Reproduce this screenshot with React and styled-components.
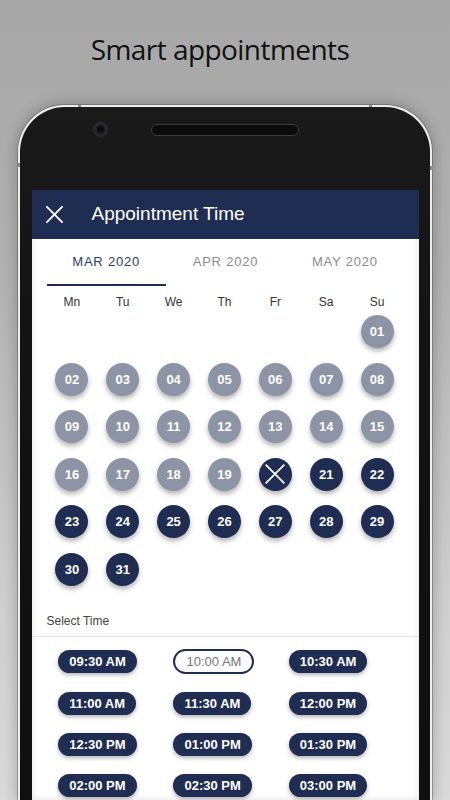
import React from "react";
import styled, { createGlobalStyle } from "styled-components";

const NAVY = "#1f2d52";
const PAST = "#8d94a6";

const GlobalStyle = createGlobalStyle`
  html, body { margin: 0; padding: 0; }
  body {
    width: 450px;
    height: 800px;
    overflow: hidden;
    font-family: "Liberation Sans", Arial, sans-serif;
    background: linear-gradient(180deg, #a7a7a7 0%, #b2b2b2 35%, #cfcfcf 75%, #dadada 100%);
  }
  * { box-sizing: border-box; }
`;

const Page = styled.div`
  width: 450px;
  height: 800px;
  overflow: hidden;
  display: flex;
  flex-direction: column;
  align-items: center;
`;

const Title = styled.h1`
  flex-shrink: 0;
  margin: 0;
  height: 105px;
  width: 100%;
  display: flex;
  align-items: center;
  justify-content: center;
  padding: 0 10px 7px 0;
  font-family: "Open Sans", "Noto Sans", sans-serif;
  font-weight: 400;
  font-size: 28px;
  letter-spacing: -0.55px;
  color: #111;
`;

const Phone = styled.div`
  position: relative;
  flex-shrink: 0;
  width: 414px;
  min-height: 695px;
  border: 2.5px solid #eeeeee;
  border-bottom: none;
  border-radius: 47px 47px 0 0;
  background: linear-gradient(180deg, #1a1a1a 0%, #131313 35%, #0f0f0f 100%);
  padding: 0 11.5px;
  box-shadow: 0 0 0 1px rgba(60, 60, 60, 0.35), 0 0 14px 2px rgba(0, 0, 0, 0.22);
  display: flex;
  flex-direction: column;
`;

const AntennaMark = styled.span`
  position: absolute;
  background: #8a8a8a;
  ${(p) => (p.$side === "top" ? `top: -2.5px; width: 3px; height: 2.5px;` : `width: 2.5px; height: 4px;`)}
`;

const Bezel = styled.div`
  flex-shrink: 0;
  height: 82.5px;
  display: flex;
  align-items: center;
  padding-bottom: 44px;
  padding-top: 7px;
`;

const Camera = styled.div`
  width: 15px;
  height: 15px;
  margin-left: 61.5px;
  border-radius: 50%;
  background: radial-gradient(circle at 50% 50%, #0b0b14 0 30%, #1e1e24 45%, #2c2c2c 70%, #1a1a1a 100%);
  border: 1px solid #2e2e2e;
`;

const Speaker = styled.div`
  width: 148px;
  height: 12px;
  margin-left: 42.5px;
  border-radius: 6px;
  background: #0b0b0b;
  border: 1.5px solid #3b3b3b;
`;

const Screen = styled.div`
  flex: 1 0 auto;
  background: #fff;
  box-shadow: inset 0 0 7px rgba(0, 0, 0, 0.12);
  display: flex;
  flex-direction: column;
`;

const Header = styled.div`
  height: 49px;
  flex-shrink: 0;
  background: ${NAVY};
  display: flex;
  align-items: center;
  padding-left: 13px;
  gap: 28px;
`;

const HeaderTitle = styled.span`
  color: #fff;
  font-size: 19px;
  font-weight: 400;
`;

const Tabs = styled.div`
  display: grid;
  grid-template-columns: repeat(3, 1fr);
  padding: 0 14px 0 15px;
`;

const Tab = styled.div`
  height: 47px;
  display: flex;
  align-items: center;
  justify-content: center;
  font-size: 13px;
  letter-spacing: 0.8px;
  color: ${(p) => (p.$active ? "#2b3b6c" : "#8b8b8b")};
  border-bottom: 2px solid ${(p) => (p.$active ? NAVY : "transparent")};
`;

const Calendar = styled.div`
  padding: 0 16px 0 15px;
`;

const WeekRow = styled.div`
  display: grid;
  grid-template-columns: repeat(7, 1fr);
  margin-top: 8px;
  line-height: 16px;
  font-size: 12px;
  color: #333;
  justify-items: center;
`;

const DayGrid = styled.div`
  display: grid;
  grid-template-columns: repeat(7, 1fr);
  row-gap: 14.6px;
  margin-top: 5.5px;
  justify-items: center;
`;

const Day = styled.div`
  width: 33px;
  height: 33px;
  border-radius: 50%;
  display: flex;
  align-items: center;
  justify-content: center;
  background: ${(p) => (p.$past ? PAST : NAVY)};
  color: #fff;
  font-weight: 700;
  font-size: 13px;
  box-shadow: 0 3px 5px rgba(0, 0, 0, 0.3);
  grid-column: ${(p) => p.$col || "auto"};
`;

const SelectLabel = styled.div`
  margin-top: 27px;
  padding: 0 0 7px 15px;
  line-height: 16px;
  font-size: 12px;
  color: #444;
  border-bottom: 1px solid #e3e3e3;
`;

const TimeGrid = styled.div`
  display: grid;
  grid-template-columns: repeat(3, 115.3px);
  grid-auto-rows: 25px;
  row-gap: 16.3px;
  padding: 12.5px 0 0 26.7px;
  align-items: center;
  justify-items: start;
`;

const Pill = styled.div`
  height: ${(p) => (p.$outline ? "25px" : "23px")};
  line-height: ${(p) => (p.$outline ? "21px" : "23px")};
  padding: 0 11px;
  border-radius: 13px;
  font-size: 13px;
  white-space: nowrap;
  font-weight: ${(p) => (p.$outline ? 400 : 700)};
  color: ${(p) => (p.$outline ? "#777" : "#fff")};
  background: ${(p) => (p.$outline ? "#fff" : NAVY)};
  border: ${(p) => (p.$outline ? `2px solid ${NAVY}` : "none")};
  box-shadow: ${(p) => (p.$outline ? "none" : "0 2px 4px rgba(0,0,0,0.3)")};
`;

const CloseIcon = ({ size = 19, stroke = 2 }) => (
  <svg width={size} height={size} viewBox="0 0 20 20" fill="none">
    <path d="M1.5 1.5 L18.5 18.5 M18.5 1.5 L1.5 18.5" stroke="#fff" strokeWidth={stroke} strokeLinecap="butt" />
  </svg>
);

const weekdays = ["Mn", "Tu", "We", "Th", "Fr", "Sa", "Su"];
const days = Array.from({ length: 31 }, (_, i) => i + 1);
const times = [
  "09:30 AM", "10:00 AM", "10:30 AM",
  "11:00 AM", "11:30 AM", "12:00 PM",
  "12:30 PM", "01:00 PM", "01:30 PM",
  "02:00 PM", "02:30 PM", "03:00 PM",
];

export default function App() {
  return (
    <>
      <GlobalStyle />
      <Page>
        <Title>Smart appointments</Title>
        <Phone>
          <AntennaMark $side="top" style={{ left: 58 }} />
          <AntennaMark $side="top" style={{ right: 58 }} />
          <AntennaMark $side="left" style={{ left: -2.5, top: 56 }} />
          <AntennaMark $side="right" style={{ right: -2.5, top: 59 }} />
          <Bezel>
            <Camera />
            <Speaker />
          </Bezel>
          <Screen>
            <Header>
              <CloseIcon />
              <HeaderTitle>Appointment Time</HeaderTitle>
            </Header>
            <Tabs>
              <Tab $active>MAR 2020</Tab>
              <Tab>APR 2020</Tab>
              <Tab>MAY 2020</Tab>
            </Tabs>
            <Calendar>
              <WeekRow>
                {weekdays.map((w) => (
                  <span key={w}>{w}</span>
                ))}
              </WeekRow>
              <DayGrid>
                {days.map((d) => (
                  <Day key={d} $past={d < 20} $col={d === 1 ? 7 : undefined}>
                    {d === 20 ? <CloseIcon size={22} stroke={1.6} /> : String(d).padStart(2, "0")}
                  </Day>
                ))}
              </DayGrid>
            </Calendar>
            <SelectLabel>Select Time</SelectLabel>
            <TimeGrid>
              {times.map((t) => (
                <Pill key={t} $outline={t === "10:00 AM"}>
                  {t}
                </Pill>
              ))}
            </TimeGrid>
          </Screen>
        </Phone>
      </Page>
    </>
  );
}
